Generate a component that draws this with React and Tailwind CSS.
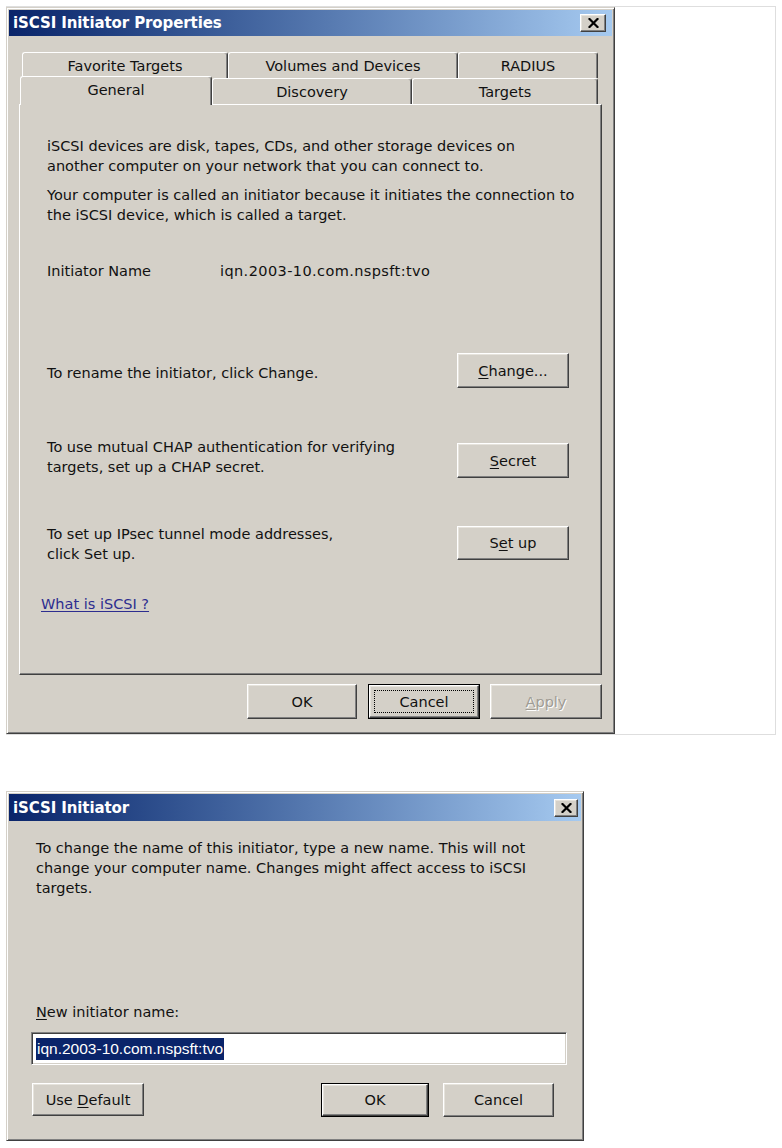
import React from 'react';

const raised =
  'bg-[#d4d0c8] border border-t-white border-l-white border-r-[#404040] border-b-[#404040] shadow-[inset_-1px_-1px_0_#808080,inset_1px_1px_0_#e6e3dc]';

function Btn({ children, className = '', def = false, focus = false, disabled = false }) {
  return (
    <div className={`${className} ${def ? 'border border-black' : ''}`}>
      <div className={`h-full w-full flex items-center justify-center ${raised}`}>
        {focus ? (
          <span className="w-[calc(100%-8px)] h-[calc(100%-8px)] border border-dotted border-black flex items-center justify-center">
            {children}
          </span>
        ) : (
          <span className={disabled ? 'text-[#a09c94] [text-shadow:1px_1px_0_#fff]' : ''}>{children}</span>
        )}
      </div>
    </div>
  );
}

function CloseBtn({ className = '' }) {
  return (
    <div className={`flex items-center justify-center ${raised} ${className}`}>
      <svg width="11" height="10" viewBox="0 0 11 10">
        <path d="M1.5 1 L9.5 9 M9.5 1 L1.5 9" stroke="#000" strokeWidth="2.2" strokeLinecap="square" />
      </svg>
    </div>
  );
}

function TitleBar({ title, h, closeClass }) {
  return (
    <div className={`${h} flex items-center justify-between bg-gradient-to-r from-[#0a246a] to-[#a6caf0] pl-[4px]`}>
      <span className="text-white font-bold text-[15px] tracking-[-0.1px]">{title}</span>
      <CloseBtn className={closeClass} />
    </div>
  );
}

function Tab({ label, w, selected = false }) {
  if (selected) {
    return (
      <div
        className={`${w} h-[29px] relative top-[1px] z-10 bg-[#d4d0c8] border-t border-l border-t-white border-l-white border-r border-r-[#404040] shadow-[inset_-1px_0_0_#808080] rounded-t-[3px] flex items-center justify-center pb-[2px]`}
      >
        {label}
      </div>
    );
  }
  return (
    <div
      className={`${w} h-[26px] bg-[#d4d0c8] border-t border-l border-t-white border-l-white border-r border-r-[#404040] shadow-[inset_-1px_0_0_#808080] rounded-t-[3px] flex items-center justify-center`}
    >
      {label}
    </div>
  );
}

const dialog =
  'bg-[#d4d0c8] border border-t-[#d4d0c8] border-l-[#d4d0c8] border-r-[#404040] border-b-[#404040] shadow-[inset_1px_1px_0_#fff,inset_-1px_-1px_0_#808080] p-[2px] flex flex-col';

export default function App() {
  return (
    <div className="w-[782px] h-[1148px] bg-white font-['DejaVu_Sans',sans-serif] text-[14.5px] leading-[20px] text-[#111] pt-[6px] pl-[6px] overflow-hidden">
      {/* Properties dialog */}
      <div className="w-[770px] h-[729px] border border-l-0 border-[#dedede]">
        <div className={`w-[609px] h-[727px] ${dialog}`}>
          <TitleBar title="iSCSI Initiator Properties" h="h-[26px]" closeClass="w-[26px] h-[18px] mr-[6px]" />

          <div className="px-[10px] pt-[16px]">
            <div className="flex ml-[3px]">
              <Tab label="Favorite Targets" w="w-[206px]" />
              <Tab label="Volumes and Devices" w="w-[230px]" />
              <Tab label="RADIUS" w="w-[140px]" />
            </div>
            <div className="flex items-end h-[26px] ml-[1px]">
              <Tab label="General" w="w-[192px]" selected />
              <Tab label="Discovery" w="w-[200px]" />
              <Tab label="Targets" w="w-[186px]" />
            </div>

            <div className="h-[571px] border border-t-white border-l-white border-r-[#404040] border-b-[#404040] shadow-[inset_-1px_-1px_0_#808080] pt-[31px] pl-[27px] pr-[32px] whitespace-nowrap">
              <p>
                iSCSI devices are disk, tapes, CDs, and other storage devices on
                <br />
                another computer on your network that you can connect to.
              </p>
              <p className="mt-[9px]">
                Your computer is called an initiator because it initiates the connection to
                <br />
                the iSCSI device, which is called a target.
              </p>
              <div className="mt-[36px] flex">
                <span className="w-[173px]">Initiator Name</span>
                <span className="tracking-[0.4px]">iqn.2003-10.com.nspsft:tvo</span>
              </div>

              <div className="mt-[72px] flex justify-between items-start">
                <span className="mt-[10px]">To rename the initiator, click Change.</span>
                <Btn className="w-[112px] h-[35px]">
                  <span className="underline underline-offset-2">C</span>hange...
                </Btn>
              </div>

              <div className="mt-[49px] flex justify-between items-start">
                <span>
                  To use mutual CHAP authentication for verifying
                  <br />
                  targets, set up a CHAP secret.
                </span>
                <Btn className="w-[112px] h-[35px] mt-[6px]">
                  <span className="underline underline-offset-2">S</span>ecret
                </Btn>
              </div>

              <div className="mt-[46px] flex justify-between items-start">
                <span>
                  To set up IPsec tunnel mode addresses,
                  <br />
                  click Set up.
                </span>
                <Btn className="w-[112px] h-[34px] mt-[2px]">
                  S<span className="underline underline-offset-2">e</span>t up
                </Btn>
              </div>

              <div className="mt-[30px] -ml-[6px]">
                <span className="text-[#2d2d8f] underline underline-offset-2">What is iSCSI ?</span>
              </div>
            </div>

            <div className="mt-[9px] flex justify-end">
              <Btn className="w-[110px] h-[35px]">OK</Btn>
              <Btn className="w-[112px] h-[35px] ml-[11px]" def focus>
                Cancel
              </Btn>
              <Btn className="w-[112px] h-[35px] ml-[10px]" disabled>
                <span className="underline underline-offset-2">A</span>pply
              </Btn>
            </div>
          </div>
        </div>
      </div>

      {/* Rename dialog */}
      <div className={`mt-[56px] w-[578px] h-[350px] ${dialog}`}>
        <TitleBar title="iSCSI Initiator" h="h-[27px]" closeClass="w-[24px] h-[18px] mr-[3px]" />
        <div className="pl-[27px] pt-[17px] whitespace-nowrap">
          <p>
            To change the name of this initiator, type a new name. This will not
            <br />
            change your computer name. Changes might affect access to iSCSI
            <br />
            targets.
          </p>
          <p className="mt-[104px]">
            <span className="underline underline-offset-2">N</span>ew initiator name:
          </p>
        </div>
        <div className="pl-[22px] pr-[14px] mt-[10px]">
          <div className="h-[33px] bg-white border border-t-[#808080] border-l-[#808080] border-r-white border-b-white shadow-[inset_1px_1px_0_#404040,inset_-1px_-1px_0_#d4d0c8] flex items-center pl-[4px]">
            <span className="bg-[#0a246a] text-white px-[1px] leading-[22px] font-['Liberation_Sans',sans-serif] text-[15.5px]">
              iqn.2003-10.com.nspsft:tvo
            </span>
          </div>
        </div>
        <div className="flex items-start pl-[23px] pr-[27px] mt-[18px]">
          <Btn className="w-[112px] h-[33px]">
            Use <span className="underline underline-offset-2">D</span>efault
          </Btn>
          <div className="flex-1" />
          <Btn className="w-[108px] h-[34px]" def>
            OK
          </Btn>
          <Btn className="w-[111px] h-[34px] ml-[14px]">Cancel</Btn>
        </div>
      </div>
    </div>
  );
}
